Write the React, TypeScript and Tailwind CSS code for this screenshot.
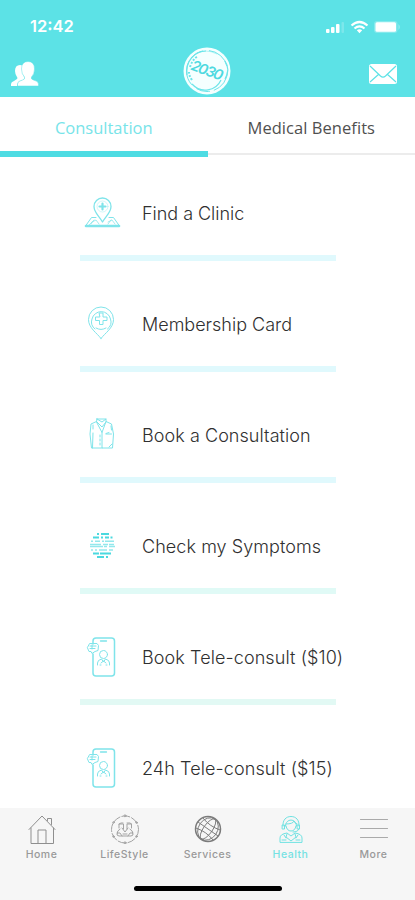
import React from "react";

type IconProps = { children: React.ReactNode; color?: string };

function RowIcon({ children }: IconProps) {
  return (
    <svg viewBox="0 0 40 44" className="h-11 w-10 shrink-0" fill="none" stroke="#7fe4ea" strokeWidth="1" strokeLinecap="round" strokeLinejoin="round">
      {children}
    </svg>
  );
}

const FindIcon = () => (
  <RowIcon>
    <path d="M20.500 31C17 25 12 21.500 12 15.500a8.500 8.500 0 0 1 17 0c0 6-5 9.500-8.500 15.500Z" strokeWidth="1.300" />
    <circle cx="20.500" cy="15.500" r="5.500" strokeOpacity=".35" />
    <path d="M20.500 12.500v6M17.500 15.500h6" strokeWidth="2.200" />
    <path d="M14 26.500H9.500L3.500 35h34l-6-8.500H27" />
    <path d="M10 31l4-2 3 4M26 31l4-2 3 4M7 34l3-3M12 29l-3 4M29 29l-3 4" strokeOpacity=".7" />
    <path d="M4 35h33" strokeWidth="2.600" />
  </RowIcon>
);

const PinIcon = () => (
  <RowIcon>
    <path d="M19 36.500C15 31 6.500 26 6.500 17.500a12.500 12.500 0 0 1 25 0c0 8.500-8.500 13.500-12.500 19Z" />
    <path d="M13 27a9 9 0 0 1-3-10 9.500 9.500 0 0 1 18.500 0 9 9 0 0 1-3 10M14 26q5 3 10 0" />
    <path d="M17.500 11h3.500v4h4v3.500h-4v4h-3.500v-4h-4V15h4Z" />
  </RowIcon>
);

const JacketIcon = () => (
  <RowIcon>
    <path d="M15 6h9v2.500l5.500 2.500 2 10-1 14H20V19.500L14.500 9 15 6ZM14.500 8.500 9 11 8 21l1.500 14H20M24 8.500l-4 11M15 6l5 3 4-3M15 9l5 5 4-5" />
    <path d="M11 12v4M11 20l-.5 15M29 13l.5 4M24 21h5.500M24 20.500l3-1M30 31l-3 3" />
    <path d="M18 22v12" strokeDasharray="2 2" />
  </RowIcon>
);

const SymptomsIcon = () => (
  <RowIcon>
    <g stroke="#4bd9df" strokeLinecap="butt">
      <path d="M15 10h2M19 10h8M11 13.500h6M19 13.500h2M23 13.500h4M28.500 13.500h2" strokeWidth="1.800" />
      <path d="M9 17.200h2M13 17.200h5M20 17.200h2M23 17.200h9M8 20.500h11M21 20.500h5M27 20.500h5" strokeWidth="1.500" strokeOpacity=".6" />
      <path d="M8 22.500h13M22 22.500h3M27 22.500h6M9 26h2M13 26h2M17 26h8M27 26h4" strokeWidth="1.500" strokeOpacity=".6" />
      <path d="M11 29.500h6M18 29.500h11M15 33h7M24 33h2" strokeWidth="1.800" />
    </g>
  </RowIcon>
);

const PhoneIcon = () => (
  <RowIcon>
    <path d="M11 9V6a3 3 0 0 1 3-3h15.500A3 3 0 0 1 32.500 6v32a3 3 0 0 1-3 3H14a3 3 0 0 1-3-3V19" strokeWidth="1.500" />
    <path d="M18.500 6h6" strokeWidth="1.300" />
    <circle cx="21.500" cy="19.500" r="4" />
    <path d="M15.500 30v-2q0-3 4-4l2 3 2-3q4 1 4 4v2M19 28l2.500-2 2.500 2M18 30h1M24 30h1" />
    <path d="M8 8.500h7l1.500 2-.5 5-3 1-3 2-1-2H7L5.500 13ZM8 11h6M8 13.500h5M10 10v4" />
  </RowIcon>
);

const rows = [
  { label: "Find a Clinic", icon: <FindIcon />, line: "bg-[#e0f9fd]", track: "tracking-[-0.03px]" },
  { label: "Membership Card", icon: <PinIcon />, line: "bg-[#e0f9fd]", track: "tracking-[0px]" },
  { label: "Book a Consultation", icon: <JacketIcon />, line: "bg-[#e0f9fd]", track: "tracking-[0.06px]" },
  { label: "Check my Symptoms", icon: <SymptomsIcon />, line: "bg-[#e0faf6]", track: "tracking-[0.06px]" },
  { label: "Book Tele-consult ($10)", icon: <PhoneIcon />, line: "bg-[#e2f9f4]", track: "tracking-[0.09px]" },
  { label: "24h Tele-consult ($15)", icon: <PhoneIcon />, line: "bg-[#e2f9f4]", track: "tracking-[0.09px]" },
];

function NavIcon({ children, color = "#8f8f8f" }: IconProps) {
  return (
    <svg viewBox="0 0 30 30" className="h-[30px] w-[30px]" fill="none" stroke={color} strokeWidth="1" strokeLinecap="round" strokeLinejoin="round">
      {children}
    </svg>
  );
}

const navItems = [
  {
    label: "Home",
    icon: (
      <NavIcon>
        <path d="M2 15.500 15 2l13 13.500M4 14v15.500h22.500V14M11 29V16h8v13M20.500 6.500V4.500h4v6" />
      </NavIcon>
    ),
  },
  {
    label: "LifeStyle",
    icon: (
      <NavIcon color="#a3a3a3">
        <circle cx="15" cy="15.500" r="13.500" strokeDasharray="8 2" />
        <circle cx="15" cy="1.800" r="1" />
        <circle cx="15" cy="28.800" r="1" />
        <circle cx="3.500" cy="8.500" r=".8" />
        <circle cx="26.500" cy="8.500" r=".8" />
        <circle cx="3.500" cy="22.500" r=".8" />
        <circle cx="26.500" cy="22.500" r=".8" />
        <path d="M9 14v-4h4.500v5M17 15v-5h4.500v4M9 10l2-1h2M17 9h3l1.500 1M12 14l3 4 3-4M10 15q-3 1-3 6l2 1h12l2-1q0-5-3-6M7 19h3l2 3M23 19h-3l-2 3M13 20h4" />
      </NavIcon>
    ),
  },
  {
    label: "Services",
    icon: (
      <NavIcon color="#7b7b7b">
        <circle cx="15" cy="15" r="12.500" strokeWidth="1.500" />
        <g transform="rotate(35 15 15)" strokeWidth=".9">
          <ellipse cx="15" cy="15" rx="4.500" ry="12" />
          <ellipse cx="15" cy="15" rx="9.500" ry="12" />
          <path d="M3 15h24M5 9q10 3 20 0M5 21q10-3 20 0" />
        </g>
      </NavIcon>
    ),
  },
  {
    label: "Health",
    active: true,
    icon: (
      <NavIcon color="#6fe2e2">
        <path d="M7 12C6.500 6 10 2.500 15 2.500S23.500 6 23 12M9.500 12c0-8 11-8 11 0M10 10q7 0 8-3 1 3 3 3M10 12q1 5 5 5t5-5M6.500 11h2v4h-2ZM21.500 11h2v4h-2ZM23 15q-1 3-6 3" />
        <path d="M4 28v-4q0-4 7-5l4 3 4-3q7 1 7 5v4ZM8 21l2 3M22 21l-2 3M11 20l-1 3 5 4 5-4-1-3M6 26h4M20 26h4" />
      </NavIcon>
    ),
  },
  {
    label: "More",
    icon: (
      <NavIcon color="#aaaaaa">
        <path d="M1.500 5.500h27M1.500 14.500h27M1.500 23.500h27" strokeWidth="1.200" />
      </NavIcon>
    ),
  },
];

function StatusIcons() {
  return (
    <svg viewBox="0 0 76 16" className="h-4 w-[76px]" fill="white">
      <rect x="1" y="10" width="3.500" height="4" rx="1" />
      <rect x="6" y="8" width="3.500" height="6" rx="1" />
      <rect x="11" y="5" width="3.500" height="9" rx="1" />
      <rect x="16.500" y="3" width="2.500" height="11" rx="1" opacity=".2" />
      <g fill="none" stroke="white" strokeWidth="2.200">
        <path d="M26.500 6.500q8-7 16 0M29.500 9.500q5-4.300 10 0" />
      </g>
      <path d="m31.800 11.300 2.700 2.900 2.700-2.900q-2.700-2-5.400 0Z" />
      <rect x="49" y="2" width="23.500" height="12" rx="3" opacity=".25" />
      <rect x="50.500" y="3.300" width="20.500" height="9.400" rx="1.500" />
      <path d="M73.500 5q2.500 3 0 6Z" opacity=".4" />
    </svg>
  );
}

function Logo() {
  return (
    <svg viewBox="0 0 50 50" className="h-[50px] w-[50px]">
      <circle cx="25" cy="25" r="23.500" fill="#f5ffff" />
      <g fill="none" stroke="#6ce5e9">
        <circle cx="25" cy="25" r="20.500" strokeWidth="1" strokeDasharray="25 4 14 6" />
        <path d="M5 29C3 15 13 5 24 5M10 38c9 10 24 7 29-4M43 15c4 6 3 13 0 18" strokeWidth="1.200" />
        <path d="M8 21q2-7 8-11M10 34q-3-4-3-8" strokeWidth="2" strokeDasharray="2 1.500" />
        <path d="M14 8q9-6 21 0" strokeWidth=".8" strokeOpacity=".6" />
      </g>
      <text x="25" y="29.500" transform="rotate(20 25 25)" textAnchor="middle" textLength="33" fontFamily="Inter, sans-serif" fontWeight="600" fontStyle="italic" fontSize="14.500" fill="#4ed9e0">
        2030
      </text>
    </svg>
  );
}

export default function App() {
  return (
    <div className="flex h-[900px] w-[415px] flex-col overflow-hidden bg-white font-['Inter',sans-serif]">
      <header className="flex h-[97px] shrink-0 flex-col bg-[#5ce2e6]">
        <div className="flex h-[46px] items-center justify-between pt-[7px] pr-[14px] pl-[30px]">
          <span className="text-[16.5px] font-semibold text-white">12:42</span>
          <StatusIcons />
        </div>
        <div className="grid h-[50px] grid-cols-3 items-center pr-[18px] pl-[11px]">
          <svg viewBox="0 0 28 26" className="mt-[5px] h-[26px] w-7" fill="white">
            <path d="M0 25v-2q0-2 3-3l3-2q1-1 0-2-2-3-2-6 0-6 5-6 3 0 4 2-3 3-1 8 1 2 2 3-1 2-5 3-3 1-3 5Z" />
            <path d="M6.500 25v-2q0-3 5-4 3-1 2-3-3-3-3-8 0-7.500 6.500-7.500T23.500 8q0 5-3 8-1 2 2 3 5 1 5 4v2Z" stroke="#5ce2e6" strokeWidth=".5" />
          </svg>
          <div className="flex justify-center pl-[7px]">
            <Logo />
          </div>
          <svg viewBox="0 0 28 20" className="mt-[5px] h-5 w-7 justify-self-end">
            <rect width="28" height="20" rx="2.500" fill="white" />
            <path d="m1 2 10.500 10q2.500 2.200 5 0L27 2M1 18l9-8M27 18l-9-8" fill="none" stroke="#5ce2e6" strokeWidth="1.200" />
          </svg>
        </div>
      </header>

      <nav className="grid h-[61px] shrink-0 grid-cols-2 font-['Open_Sans',sans-serif] text-[16.5px]">
        <button className="flex h-[60px] items-center justify-center border-b-[6px] border-[#4edce3] pt-[8px] text-[#78e4e9]">
          Consultation
        </button>
        <button className="flex h-[58px] items-center justify-center border-b-2 border-[#ececec] pt-[6px] tracking-[0.05px] text-[#505050]">
          Medical Benefits
        </button>
      </nav>

      <main className="min-h-0 flex-1 overflow-hidden">
        {rows.map((row) => (
          <section key={row.label} className="h-[111px] pt-[27px] pr-12 pl-20">
            <div className="flex h-14 items-center pl-[2px]">
              {row.icon}
              <span className={`ml-5 text-[18px] font-light whitespace-nowrap text-[#303030] ${row.track}`}>{row.label}</span>
            </div>
            <div className={`mt-[14px] h-[6px] w-64 ${row.line}`} />
          </section>
        ))}
      </main>

      <footer className="flex h-[92px] shrink-0 flex-col items-center bg-[#f6f6f6]">
        <div className="grid h-[78px] w-full grid-cols-5 pt-[6px]">
          {navItems.map((item) => (
            <div key={item.label} className={`flex flex-col items-center gap-[3px] ${item.active ? "text-[#75e2e3]" : "text-[#999]"}`}>
              {item.icon}
              <span className="text-[10.5px] leading-[15px] font-medium tracking-[0.5px]">{item.label}</span>
            </div>
          ))}
        </div>
        <div className="h-[5px] w-[148px] rounded-full bg-black" />
      </footer>
    </div>
  );
}
